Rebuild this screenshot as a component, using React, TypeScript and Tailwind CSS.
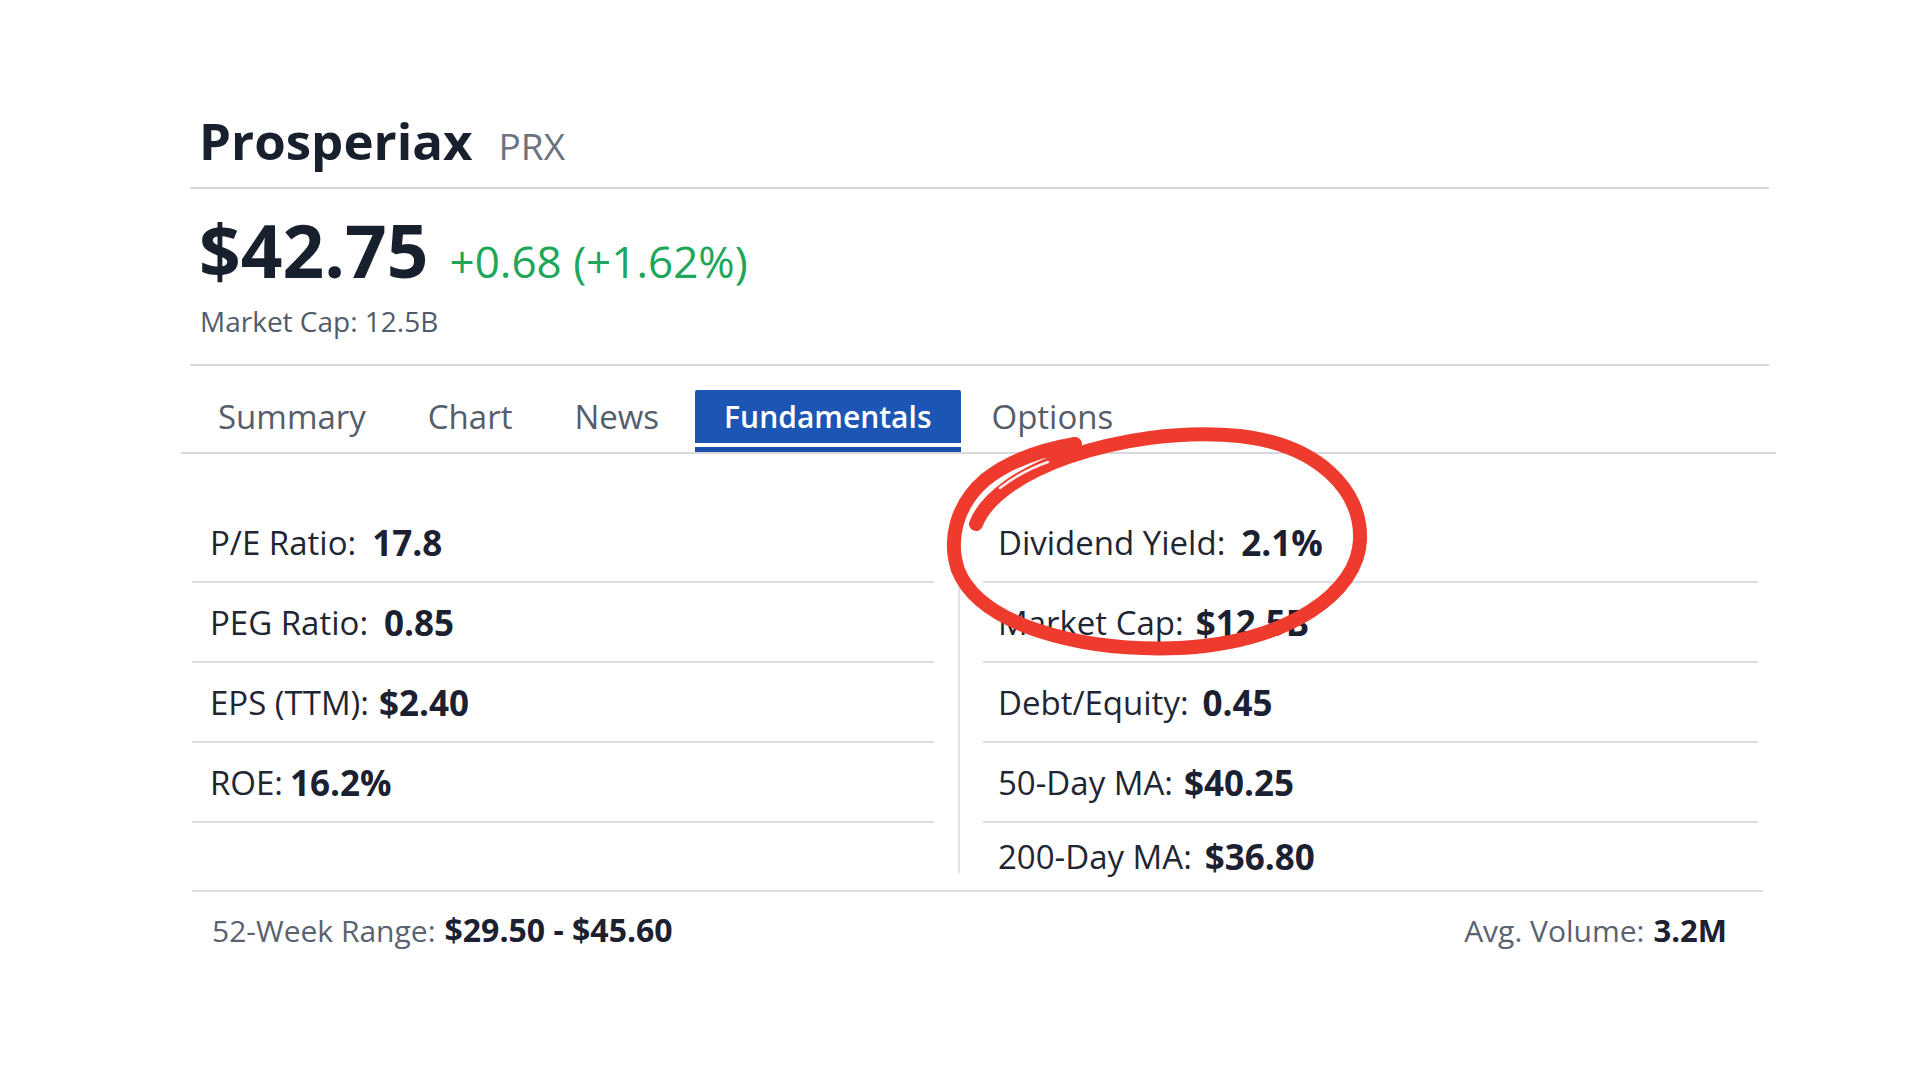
import React from 'react'

interface Metric {
  label: string
  value: string
  gap: string
}

const leftMetrics: Metric[] = [
  { label: 'P/E Ratio:', value: '17.8', gap: 'ml-[16px]' },
  { label: 'PEG Ratio:', value: '0.85', gap: 'ml-[16px]' },
  { label: 'EPS (TTM):', value: '$2.40', gap: 'ml-[10px]' },
  { label: 'ROE:', value: '16.2%', gap: 'ml-[7px]' },
]

const rightMetrics: Metric[] = [
  { label: 'Dividend Yield:', value: '2.1%', gap: 'ml-[16px]' },
  { label: 'Market Cap:', value: '$12.5B', gap: 'ml-[12px]' },
  { label: 'Debt/Equity:', value: '0.45', gap: 'ml-[14px]' },
  { label: '50-Day MA:', value: '$40.25', gap: 'ml-[11px]' },
  { label: '200-Day MA:', value: '$36.80', gap: 'ml-[13px]' },
]

const tabs = ['Summary', 'Chart', 'News', 'Fundamentals', 'Options']

function MetricRow({ m, last, inset }: { m: Metric; last?: boolean; inset: string }) {
  return (
    <div
      className={
        last
          ? `flex h-[67px] items-center ${inset}`
          : `flex h-[80px] items-center border-b-2 border-[#dcdee2] ${inset}`
      }
    >
      <span className="text-[33px] leading-none text-[#1f2633]">{m.label}</span>
      <span className={`${m.gap} text-[35px] leading-none font-bold text-[#1b2130]`}>{m.value}</span>
    </div>
  )
}

// hand-drawn marker ring around the dividend row
function MarkerCircle() {
  return (
    <svg
      className="pointer-events-none absolute left-[940px] top-[420px]"
      width="440"
      height="250"
      viewBox="0 0 440 250"
      fill="none"
    >
      <path
        d="M 36 104 C 46 78, 80 54, 128 37 C 178 20, 240 10, 300 16 C 378 25, 422 70, 420 120 C 418 172, 350 222, 240 228 C 140 232, 40 205, 18 150 C 8 120, 16 85, 45 60 C 70 40, 100 30, 135 24"
        stroke="#ef3b2e"
        strokeWidth="14"
        strokeLinecap="round"
        strokeLinejoin="round"
      />
      <path d="M 60 68 Q 82 51 108 42" stroke="#ffffff" strokeWidth="2.5" strokeLinecap="round" opacity="0.9" />
    </svg>
  )
}

export default function App() {
  return (
    <div className="relative h-[1080px] w-[1920px] overflow-hidden bg-white" style={{ fontFamily: '"Open Sans", "Noto Sans", sans-serif' }}>
      <div className="pl-[190px] pt-[115px]">
        <div className="w-[1580px]">
          {/* header */}
          <div className="flex items-baseline gap-[26px] pl-[9px]">
            <h1 className="text-[51px] leading-none font-bold text-[#18202e]">Prosperiax</h1>
            <span className="text-[37px] leading-none font-medium text-[#6b7280]">PRX</span>
          </div>
          <div className="mt-[21px] h-[2px] w-[1579px] bg-[#d6d8dd]" />

          <div className="mt-[24px] flex items-baseline gap-[21px] pl-[9px]">
            <span className="text-[73px] leading-none font-bold text-[#18202e]">$42.75</span>
            <span className="text-[44px] leading-none font-medium text-[#1ea65a]">+0.68 (+1.62%)</span>
          </div>
          <div className="mt-[21px] pl-[10px] text-[28px] leading-none text-[#525b69]">Market Cap: 12.5B</div>
          <div className="mt-[29px] h-[2px] w-[1579px] bg-[#d6d8dd]" />

          {/* tabs */}
          <div className="ml-[-9px] mt-[24px] w-[1595px] border-b-2 border-[#d6d8dd] pl-[6px]">
            <div className="flex items-end">
              {tabs.map((t) =>
                t === 'Fundamentals' ? (
                  <div key={t} className="ml-[5px] flex flex-col">
                    <div className="flex h-[53px] items-center rounded-t-[2px] bg-[#1d55b5] px-[29px] text-[30px] leading-none font-semibold text-white">
                      {t}
                    </div>
                    <div className="mt-[4px] h-[5px] bg-[#1b4ea8]" />
                  </div>
                ) : (
                  <div key={t} className="flex flex-col">
                    <div className="flex h-[53px] items-center px-[31px] text-[33px] leading-none text-[#555d6b]">{t}</div>
                    <div className="mt-[4px] h-[5px]" />
                  </div>
                )
              )}
            </div>
          </div>

          {/* fundamentals grid */}
          <div className="flex items-start pt-[49px]">
            <div className="ml-[2px] w-[742px]">
              {leftMetrics.map((m) => (
                <MetricRow key={m.label} m={m} inset="pl-[18px]" />
              ))}
            </div>
            <div className="ml-[24px] mt-[81px] h-[289px] w-[2px] bg-[#e0e2e6]" />
            <div className="ml-[23px] w-[775px]">
              {rightMetrics.map((m, i) => (
                <MetricRow key={m.label} m={m} last={i === rightMetrics.length - 1} inset="pl-[15px]" />
              ))}
            </div>
          </div>
          <div className="ml-[2px] h-[2px] w-[1571px] bg-[#dcdee2]" />

          {/* footer */}
          <div className="mt-[22px] flex w-[1573px] items-baseline justify-between pl-[22px] pr-[36px]">
            <div className="flex items-baseline">
              <span className="text-[30px] leading-none text-[#5a6270]">52-Week Range:</span>
              <span className="ml-[9px] text-[32px] leading-none font-bold text-[#1b2130]">$29.50 - $45.60</span>
            </div>
            <div className="flex items-baseline">
              <span className="text-[30px] leading-none text-[#5a6270]">Avg. Volume:</span>
              <span className="ml-[9px] text-[31px] leading-none font-bold text-[#1b2130]">3.2M</span>
            </div>
          </div>
        </div>
      </div>
      <MarkerCircle />
    </div>
  )
}
